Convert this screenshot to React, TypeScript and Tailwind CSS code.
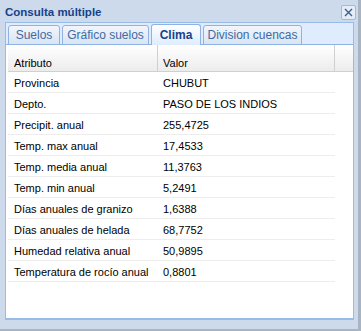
import React from "react";

const rows: [string, string][] = [
  ["Provincia", "CHUBUT"],
  ["Depto.", "PASO DE LOS INDIOS"],
  ["Precipit. anual", "255,4725"],
  ["Temp. max anual", "17,4533"],
  ["Temp. media anual", "11,3763"],
  ["Temp. min anual", "5,2491"],
  ["Días anuales de granizo", "1,6388"],
  ["Días anuales de helada", "68,7752"],
  ["Humedad relativa anual", "50,9895"],
  ["Temperatura de rocío anual", "0,8801"],
];

const tabs = [
  { label: "Suelos", w: "w-[52px]" },
  { label: "Gráfico suelos", w: "w-[87px]" },
  { label: "Clima", w: "w-[50px]", active: true },
  { label: "Division cuencas", w: "w-[99px]" },
];

export default function App() {
  return (
    <div
      className="relative w-[361px] h-[331px] overflow-hidden bg-[#cddaeb] border-r-[3px] border-b-[2px] border-[#a9b4c2] text-[11px] text-black"
      style={{ fontFamily: '"Liberation Sans", Arial, sans-serif' }}
    >
      {/* title bar */}
      <div className="h-[22px] pl-[5px] pt-[4px] font-bold text-[11.5px] text-[#15428b]">
        Consulta múltiple
      </div>
      <button className="absolute left-[341px] top-[5px] w-[15px] h-[15px] flex items-center justify-center border border-[#99bbe8] rounded-[2px] bg-[#e3ecf7]">
        <svg width="9" height="9" viewBox="0 0 9 9">
          <path d="M1 1 L8 8 M8 1 L1 8" stroke="#3d5f8c" strokeWidth="1.4" />
        </svg>
      </button>

      {/* tab strip */}
      <div className="ml-[5px] w-[349px] h-[23px] border-t border-l border-r border-[#99bbe8] bg-[#deecfd] pl-[2px] pt-[1px] flex gap-[2px] relative">
        <div className="absolute left-0 right-0 bottom-0 h-px bg-[#8db2e3]" />
        {tabs.map((t) => (
          <div
            key={t.label}
            className={
              t.active
                ? `${t.w} relative z-10 h-[21px] border border-b-0 border-[#8db2e3] rounded-t-[3px] bg-gradient-to-b from-white to-[#deecfd] flex items-center justify-center font-bold text-[12px] text-[#15428b]`
                : `${t.w} h-[20px] mt-[1px] border border-[#8db2e3] rounded-t-[3px] bg-gradient-to-b from-[#f2f6fc] to-[#d9e5f4] flex items-center justify-center text-[12px] text-[#416aa3]`
            }
          >
            {t.label}
          </div>
        ))}
      </div>

      {/* body */}
      <div className="ml-[5px] w-[349px] h-[275px] border-l border-r border-b-[2px] border-[#99bbe8] bg-white pl-[2px]">
        <div className="flex h-[27px] bg-gradient-to-b from-white to-[#ececec] border-b border-[#d0d0d0]">
          <div className="w-[150px] pl-[6px] pt-[10px] border-r border-[#d0d0d0]">Atributo</div>
          <div className="w-[177px] pl-[5px] pt-[10px] border-r border-[#d0d0d0]">Valor</div>
          <div className="flex-1" />
        </div>
        <div className="w-[327px]">
          {rows.map(([a, v]) => (
            <div key={a} className="flex h-[21px] items-center pt-[2px] border-b border-[#ededed]">
              <div className="w-[150px] pl-[6px]">{a}</div>
              <div className="pl-[5px]">{v}</div>
            </div>
          ))}
        </div>
      </div>
    </div>
  );
}
